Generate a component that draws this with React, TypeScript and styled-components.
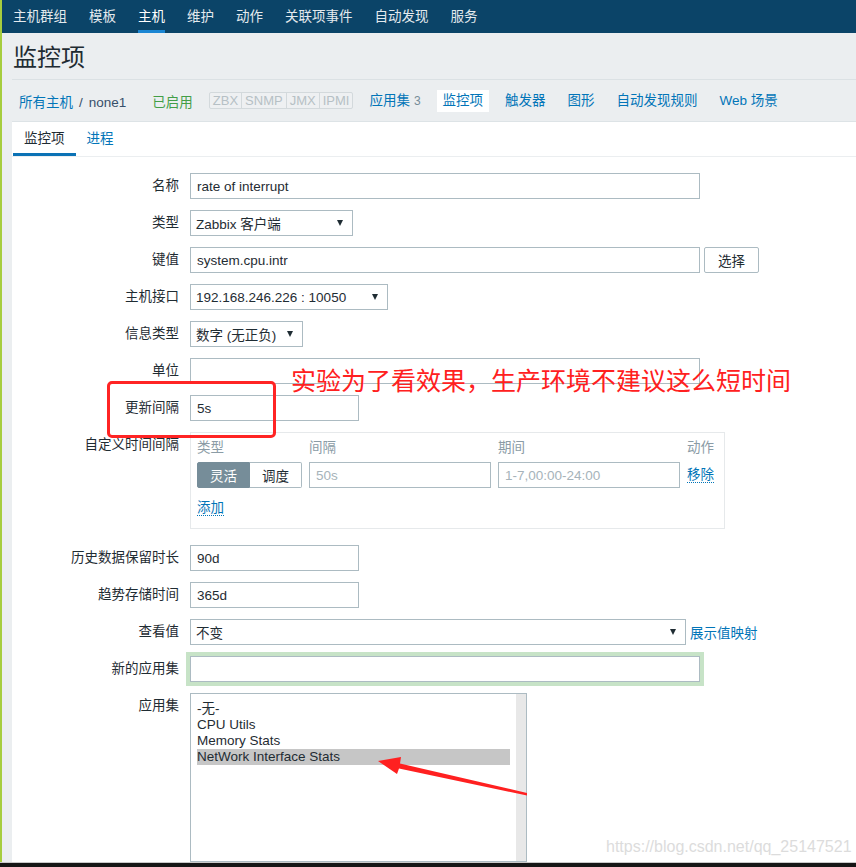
import styled, { createGlobalStyle } from "styled-components";

const GlobalStyle = createGlobalStyle`
  html, body {
    margin: 0;
    padding: 0;
  }
  body {
    font-family: "Liberation Sans", Arial, "Noto Sans CJK SC", sans-serif;
    font-size: 13.5px;
    color: #1f2c33;
    background: #ebeef0;
  }
  * {
    box-sizing: border-box;
  }
`;

const Frame = styled.div`
  position: relative;
  width: 856px;
  height: 867px;
  padding-left: 2px;
  background: #a6cd3e;
  display: flex;
  flex-direction: column;
  overflow: hidden;
`;

const Page = styled.div`
  flex: 1;
  min-height: 0;
  background: #ebeef0;
  display: flex;
  flex-direction: column;
  overflow: hidden;
`;

const BottomEdge = styled.div`
  flex-shrink: 0;
  height: 5px;
  margin-left: -2px;
  border-top: 1px solid #c9c9c9;
  background: #161616;
`;

const TopNav = styled.nav`
  height: 33px;
  flex-shrink: 0;
  display: flex;
  background: #0b4468;
`;

const NavItem = styled.a<{ $active?: boolean }>`
  position: relative;
  padding: 0 11px;
  line-height: 33px;
  white-space: nowrap;
  color: ${(p) => (p.$active ? "#ffffff" : "#e4eaee")};
  &::after {
    content: "";
    position: absolute;
    left: 11px;
    right: 11px;
    bottom: 0;
    height: 3px;
    background: ${(p) => (p.$active ? "#1b86d3" : "transparent")};
  }
`;

const Header = styled.header`
  margin-left: 10px;
  flex-shrink: 0;
`;

const Title = styled.h1`
  margin: 0;
  height: 47px;
  padding: 3px 0 0 1px;
  line-height: 43px;
  font-size: 24px;
  font-weight: normal;
  color: #1f2c33;
  border-bottom: 1px solid #dbe1e4;
`;

const BreadRow = styled.div`
  height: 41px;
  display: flex;
  align-items: center;
  gap: 10px;
  padding-left: 1px;
`;

const Crumbs = styled.div`
  padding: 0 6px;
  white-space: nowrap;
  color: #0275b8;
`;

const CrumbSep = styled.span`
  margin: 0 6px;
  color: #37506a;
`;

const CrumbCurrent = styled.span`
  color: #37506a;
`;

const Status = styled.span`
  padding: 0 6px;
  margin-left: 4px;
  color: #429e47;
`;

const Tags = styled.div`
  display: flex;
  border: 1px solid #d3d9dc;
  border-radius: 2px;
  background: #eef0f2;
`;

const Tag = styled.span`
  padding: 0 3px;
  line-height: 15px;
  font-size: 13px;
  color: #b6c0c5;
  & + & {
    border-left: 1px solid #d3d9dc;
  }
`;

const BreadLink = styled.a<{ $active?: boolean }>`
  padding: 0 6px;
  line-height: 22px;
  white-space: nowrap;
  color: #0275b8;
  background: ${(p) => (p.$active ? "#ffffff" : "transparent")};
`;

const Count = styled.span`
  margin-left: 4px;
  font-size: 12px;
  color: #768d99;
`;

const Panel = styled.main`
  flex: 1;
  min-height: 0;
  margin-left: 10px;
  background: #ffffff;
  border-top: 1px solid #dde3e6;
  overflow: hidden;
`;

const TabBar = styled.div`
  display: flex;
  padding-left: 1px;
  border-bottom: 1px solid #ebeef0;
`;

const Tab = styled.a<{ $active?: boolean }>`
  position: relative;
  padding: 0 11px;
  height: 34px;
  line-height: 34px;
  color: ${(p) => (p.$active ? "#1f2c33" : "#0275b8")};
  &::after {
    content: "";
    position: absolute;
    left: 0;
    right: 0;
    bottom: 0;
    height: 3px;
    background: ${(p) => (p.$active ? "#0b72b5" : "transparent")};
  }
`;

const Form = styled.div`
  display: grid;
  grid-template-columns: 167px 1fr;
  column-gap: 11px;
  row-gap: 11px;
  align-items: start;
  padding-top: 16px;
`;

const Label = styled.div`
  text-align: right;
  line-height: 26px;
  white-space: nowrap;
`;

const Field = styled.div`
  display: flex;
  align-items: center;
  gap: 4px;
`;

const TextInput = styled.input<{ $w: number; $focus?: boolean }>`
  width: ${(p) => p.$w}px;
  height: 26px;
  padding: 0 6px;
  border: 1px solid #acbbc2;
  border-radius: 0;
  background: #ffffff;
  font: inherit;
  color: #1f2c33;
  outline: none;
  box-shadow: ${(p) => (p.$focus ? "0 0 0 4px #c7e3c7" : "none")};
  &::placeholder {
    color: #a6b3ba;
  }
`;

const Select = styled.div<{ $w: number }>`
  width: ${(p) => p.$w}px;
  height: 26px;
  padding: 0 9px 0 5px;
  display: flex;
  align-items: center;
  justify-content: space-between;
  border: 1px solid #acbbc2;
  background: #ffffff;
  white-space: nowrap;
  &::after {
    content: "";
    border-left: 3.5px solid transparent;
    border-right: 3.5px solid transparent;
    border-top: 6px solid #1f2c33;
  }
`;

const Button = styled.button`
  height: 26px;
  padding: 0 13px;
  border: 1px solid #acbbc2;
  border-radius: 2px;
  background: #ffffff;
  font: inherit;
  color: #1f2c33;
`;

const Link = styled.a`
  color: #0275b8;
  white-space: nowrap;
`;

const DottedLink = styled.a`
  color: #0275b8;
  line-height: 16px;
  border-bottom: 1px dotted #0275b8;
  white-space: nowrap;
`;

const IntervalBox = styled.div`
  width: 535px;
  margin-bottom: 5px;
  padding: 5px 9px 10px 6px;
  border: 1px solid #e6e9eb;
`;

const IntervalGrid = styled.div`
  display: grid;
  grid-template-columns: 105px 182px 182px auto;
  column-gap: 7px;
  row-gap: 4px;
  align-items: center;
`;

const ColHead = styled.div`
  line-height: 20px;
  color: #8b9ca6;
`;

const Segmented = styled.div`
  display: flex;
  height: 26px;
`;

const Segment = styled.span<{ $active?: boolean }>`
  flex: 1;
  display: flex;
  align-items: center;
  justify-content: center;
  border: 1px solid ${(p) => (p.$active ? "#768d99" : "#acbbc2")};
  background: ${(p) => (p.$active ? "#768d99" : "#ffffff")};
  color: ${(p) => (p.$active ? "#ffffff" : "#1f2c33")};
  &:first-child {
    border-radius: 2px 0 0 2px;
  }
  &:last-child {
    border-left: none;
    border-radius: 0 2px 2px 0;
  }
`;

const AddRow = styled.div`
  padding-top: 10px;
  line-height: 20px;
`;

const ListBox = styled.div`
  width: 337px;
  height: 169px;
  display: flex;
  border: 1px solid #acbbc2;
`;

const ListItems = styled.div`
  flex: 1;
  padding: 7px 6px;
`;

const ListItem = styled.div<{ $selected?: boolean }>`
  line-height: 16px;
  white-space: nowrap;
  background: ${(p) => (p.$selected ? "#c6c6c6" : "transparent")};
`;

const ScrollTrack = styled.div`
  width: 10px;
  background: #e8e8e8;
`;

const MarkBox = styled.div`
  position: absolute;
  left: 107px;
  top: 381px;
  width: 169px;
  height: 57px;
  border: 3px solid #ff2424;
  border-radius: 5px;
`;

const MarkText = styled.div`
  position: absolute;
  left: 291px;
  top: 364px;
  font-family: "Noto Sans CJK SC", sans-serif;
  font-size: 25px;
  line-height: 30px;
  color: #ff2020;
  white-space: nowrap;
`;

const ArrowLayer = styled.svg`
  position: absolute;
  left: 0;
  top: 0;
  pointer-events: none;
`;

const Watermark = styled.div`
  position: absolute;
  left: 606px;
  top: 838px;
  font-size: 16px;
  color: #dcdcdc;
  white-space: nowrap;
`;

const navItems = ["主机群组", "模板", "主机", "维护", "动作", "关联项事件", "自动发现", "服务"];
const hostLinks = ["触发器", "图形", "自动发现规则", "Web 场景"];
const apps = ["-无-", "CPU Utils", "Memory Stats", "NetWork Interface Stats"];

export default function App() {
  return (
    <>
      <GlobalStyle />
      <Frame>
        <Page>
          <TopNav>
            {navItems.map((n) => (
              <NavItem key={n} $active={n === "主机"}>
                {n}
              </NavItem>
            ))}
          </TopNav>
          <Header>
            <Title>监控项</Title>
            <BreadRow>
              <Crumbs>
                所有主机
                <CrumbSep>/</CrumbSep>
                <CrumbCurrent>none1</CrumbCurrent>
              </Crumbs>
              <Status>已启用</Status>
              <Tags>
                <Tag>ZBX</Tag>
                <Tag>SNMP</Tag>
                <Tag>JMX</Tag>
                <Tag>IPMI</Tag>
              </Tags>
              <BreadLink>
                应用集<Count>3</Count>
              </BreadLink>
              <BreadLink $active>监控项</BreadLink>
              {hostLinks.map((l) => (
                <BreadLink key={l}>{l}</BreadLink>
              ))}
            </BreadRow>
          </Header>
          <Panel>
            <TabBar>
              <Tab $active>监控项</Tab>
              <Tab>进程</Tab>
            </TabBar>
            <Form>
              <Label>名称</Label>
              <Field>
                <TextInput $w={510} defaultValue="rate of interrupt" />
              </Field>

              <Label>类型</Label>
              <Field>
                <Select $w={163}>Zabbix 客户端</Select>
              </Field>

              <Label>键值</Label>
              <Field>
                <TextInput $w={510} defaultValue="system.cpu.intr" />
                <Button>选择</Button>
              </Field>

              <Label>主机接口</Label>
              <Field>
                <Select $w={198}>192.168.246.226 : 10050</Select>
              </Field>

              <Label>信息类型</Label>
              <Field>
                <Select $w={113}>数字 (无正负)</Select>
              </Field>

              <Label>单位</Label>
              <Field>
                <TextInput $w={510} defaultValue="" />
              </Field>

              <Label>更新间隔</Label>
              <Field>
                <TextInput $w={169} defaultValue="5s" />
              </Field>

              <Label>自定义时间间隔</Label>
              <IntervalBox>
                <IntervalGrid>
                  <ColHead>类型</ColHead>
                  <ColHead>间隔</ColHead>
                  <ColHead>期间</ColHead>
                  <ColHead>动作</ColHead>
                  <Segmented>
                    <Segment $active>灵活</Segment>
                    <Segment>调度</Segment>
                  </Segmented>
                  <TextInput $w={182} placeholder="50s" />
                  <TextInput $w={182} placeholder="1-7,00:00-24:00" />
                  <div>
                    <DottedLink>移除</DottedLink>
                  </div>
                </IntervalGrid>
                <AddRow>
                  <DottedLink>添加</DottedLink>
                </AddRow>
              </IntervalBox>

              <Label>历史数据保留时长</Label>
              <Field>
                <TextInput $w={169} defaultValue="90d" />
              </Field>

              <Label>趋势存储时间</Label>
              <Field>
                <TextInput $w={169} defaultValue="365d" />
              </Field>

              <Label>查看值</Label>
              <Field>
                <Select $w={496}>不变</Select>
                <Link>展示值映射</Link>
              </Field>

              <Label>新的应用集</Label>
              <Field>
                <TextInput $w={510} $focus defaultValue="" />
              </Field>

              <Label>应用集</Label>
              <ListBox>
                <ListItems>
                  {apps.map((a) => (
                    <ListItem key={a} $selected={a === "NetWork Interface Stats"}>
                      {a}
                    </ListItem>
                  ))}
                </ListItems>
                <ScrollTrack />
              </ListBox>
            </Form>
          </Panel>
        </Page>
        <BottomEdge />

        <MarkBox />
        <MarkText>实验为了看效果，生产环境不建议这么短时间</MarkText>
        <ArrowLayer width={856} height={867}>
          <polygon
            points="378,761 401,757 400,763.5 527,793 527,795.5 399,768.5 397,774"
            fill="#ff2020"
          />
        </ArrowLayer>
        <Watermark>https://blog.csdn.net/qq_25147521</Watermark>
      </Frame>
    </>
  );
}
